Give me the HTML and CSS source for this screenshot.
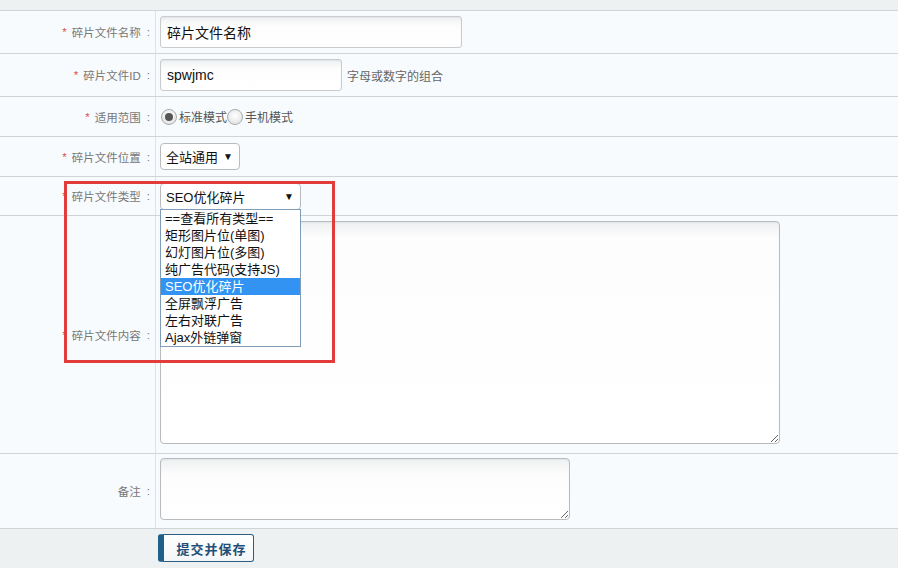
FILE: index.html
```html
<!DOCTYPE html>
<html lang="zh">
<head>
<meta charset="utf-8">
<link rel="stylesheet" href="styles.css">
</head>
<body>
<div class="page">
  <div class="topband"></div>
  <div class="row h42">
    <div class="label"><span class="req">*</span>碎片文件名称<span class="colon">:</span></div>
    <div class="field"><div class="input w302">碎片文件名称</div></div>
  </div>
  <div class="row h42">
    <div class="label"><span class="req">*</span>碎片文件ID<span class="colon">:</span></div>
    <div class="field"><div class="input w182 latin">spwjmc</div><span class="hint">字母或数字的组合</span></div>
  </div>
  <div class="row h39">
    <div class="label"><span class="req">*</span>适用范围<span class="colon">:</span></div>
    <div class="field radios">
      <span class="radio checked"></span><span class="rtext">标准模式</span>
      <span class="radio"></span><span class="rtext">手机模式</span>
    </div>
  </div>
  <div class="row h39">
    <div class="label"><span class="req">*</span>碎片文件位置<span class="colon">:</span></div>
    <div class="field"><div class="select w80">全站通用<span class="arrow">▼</span></div></div>
  </div>
  <div class="row h38">
    <div class="label"><span class="req">*</span>碎片文件类型<span class="colon">:</span></div>
    <div class="field">
      <div class="select-wrap">
        <div class="select w141">SEO优化碎片<span class="arrow">▼</span></div>
        <ul class="dropdown">
          <li>==查看所有类型==</li>
          <li>矩形图片位(单图)</li>
          <li>幻灯图片位(多图)</li>
          <li>纯广告代码(支持JS)</li>
          <li class="sel">SEO优化碎片</li>
          <li>全屏飘浮广告</li>
          <li>左右对联广告</li>
          <li>Ajax外链弹窗</li>
        </ul>
      </div>
    </div>
  </div>
  <div class="row h237">
    <div class="label"><span class="req">*</span>碎片文件内容<span class="colon">:</span></div>
    <div class="field top5"><textarea class="ta ta-big"></textarea></div>
  </div>
  <div class="row h74">
    <div class="label">备注<span class="colon">:</span></div>
    <div class="field top4"><textarea class="ta ta-small"></textarea></div>
  </div>
  <div class="footer">
    <button class="btn">提交并保存</button>
  </div>
  <div class="redbox"></div>
</div>
</body>
</html>
```
FILE: styles.css
```css
* { box-sizing: border-box; }
html, body { margin: 0; padding: 0; }
body {
  width: 898px;
  height: 568px;
  overflow: hidden;
  background: #f7fbfd;
  font-family: "Liberation Sans", "Noto Sans CJK SC", sans-serif;
  font-size: 12px;
  color: #666;
}
.page { position: relative; width: 898px; height: 568px; }
.topband {
  height: 11px;
  background: #eef1f2;
  border-bottom: 1px solid #cfd4d7;
}
.row {
  display: grid;
  grid-template-columns: 156px 1fr;
  border-bottom: 1px solid #cfd4d7;
}
.h42 { height: 43px; }
.h39 { height: 40px; }
.h38 { height: 39px; }
.h237 { height: 238px; }
.h74 { height: 75px; }
.label {
  border-right: 1px solid #dde2e5;
  display: flex;
  align-items: center;
  justify-content: flex-end;
  padding-right: 5px;
  color: #777;
  font-size: 11.5px;
  white-space: nowrap;
}
.req { color: #d9534f; margin-right: 5px; }
.colon { margin-left: 6px; }
.field {
  display: flex;
  align-items: center;
  padding-left: 4px;
}
.field.top5 { align-items: flex-start; padding-top: 5px; }
.field.top4 { align-items: flex-start; padding-top: 4px; }
.input {
  height: 32px;
  border: 1px solid #c9cccf;
  border-radius: 3px;
  background: linear-gradient(#eef0f1, #fdfdfd 9px, #fff);
  box-shadow: inset 0 1px 2px rgba(0,0,0,0.06);
  display: flex;
  align-items: center;
  padding-left: 6px;
  font-size: 14px;
  color: #111;
  font-family: "Noto Sans CJK SC", sans-serif;
}
.input.latin { font-family: "Liberation Sans", sans-serif; font-size: 14px; }
.w302 { width: 302px; }
.w182 { width: 182px; }
.hint { margin-left: 5px; color: #666; font-size: 12px; font-family: "Noto Sans CJK SC", sans-serif; }
.radios { padding-left: 5px; color: #555; font-family: "Noto Sans CJK SC", sans-serif; }
.radio {
  width: 16px; height: 16px;
  border-radius: 50%;
  border: 1px solid #a8acaf;
  background: radial-gradient(circle at 50% 40%, #ffffff, #dcdcdc);
  position: relative;
  margin-right: 2px;
}
.radio.checked::after {
  content: "";
  position: absolute;
  left: 3px; top: 3px;
  width: 8px; height: 8px;
  border-radius: 50%;
  background: #555;
}
.rtext { font-size: 12px; }
.select {
  height: 27px;
  border: 1px solid #b9bcbf;
  border-radius: 4px;
  background: #fff;
  display: flex;
  align-items: center;
  padding-left: 5px;
  font-size: 13px;
  color: #111;
  position: relative;
  font-family: "Liberation Sans", "Noto Sans CJK SC", sans-serif;
}
.arrow { position: absolute; right: 6px; font-size: 10px; top: 7px; }
.w80 { width: 80px; }
.w141 { width: 141px; }
.select-wrap { position: relative; }
.dropdown {
  position: absolute;
  left: 0;
  top: 26px;
  width: 141px;
  margin: 0;
  padding: 0;
  list-style: none;
  background: #fff;
  border: 1px solid #7f9db9;
  z-index: 5;
  font-size: 13px;
  color: #111;
  font-family: "Liberation Sans", "Noto Sans CJK SC", sans-serif;
}
.dropdown li { height: 17px; line-height: 17px; padding-left: 4px; white-space: nowrap; }
.dropdown li.sel { background: #3393f2; color: #fff; }
.ta {
  display: block;
  border: 1px solid #b9bcbf;
  border-radius: 4px;
  background: linear-gradient(#eef0f1, #fdfdfd 16px, #fff);
  box-shadow: inset 0 1px 2px rgba(0,0,0,0.06);
  margin: 0;
  padding: 4px;
  resize: both;
}
.ta-big { width: 620px; height: 223px; }
.ta-small { width: 410px; height: 62px; }
.footer {
  height: 40px;
  background: #eef1f2;
  padding-left: 158px;
  padding-top: 5px;
}
.btn {
  width: 96px;
  height: 28px;
  border: 1px solid #2a5e85;
  border-left: 6px solid #1f5f8a;
  border-radius: 3px;
  background: linear-gradient(#fff, #f3f6f8);
  color: #1f4f78;
  font-weight: bold;
  font-size: 13px;
  letter-spacing: 1px;
  font-family: "Noto Sans CJK SC", serif;
  padding: 0 0 0 6px;
}
.redbox {
  position: absolute;
  left: 64px;
  top: 181px;
  width: 271px;
  height: 182px;
  border: 3px solid #e23b3b;
  z-index: 10;
  pointer-events: none;
}
```
